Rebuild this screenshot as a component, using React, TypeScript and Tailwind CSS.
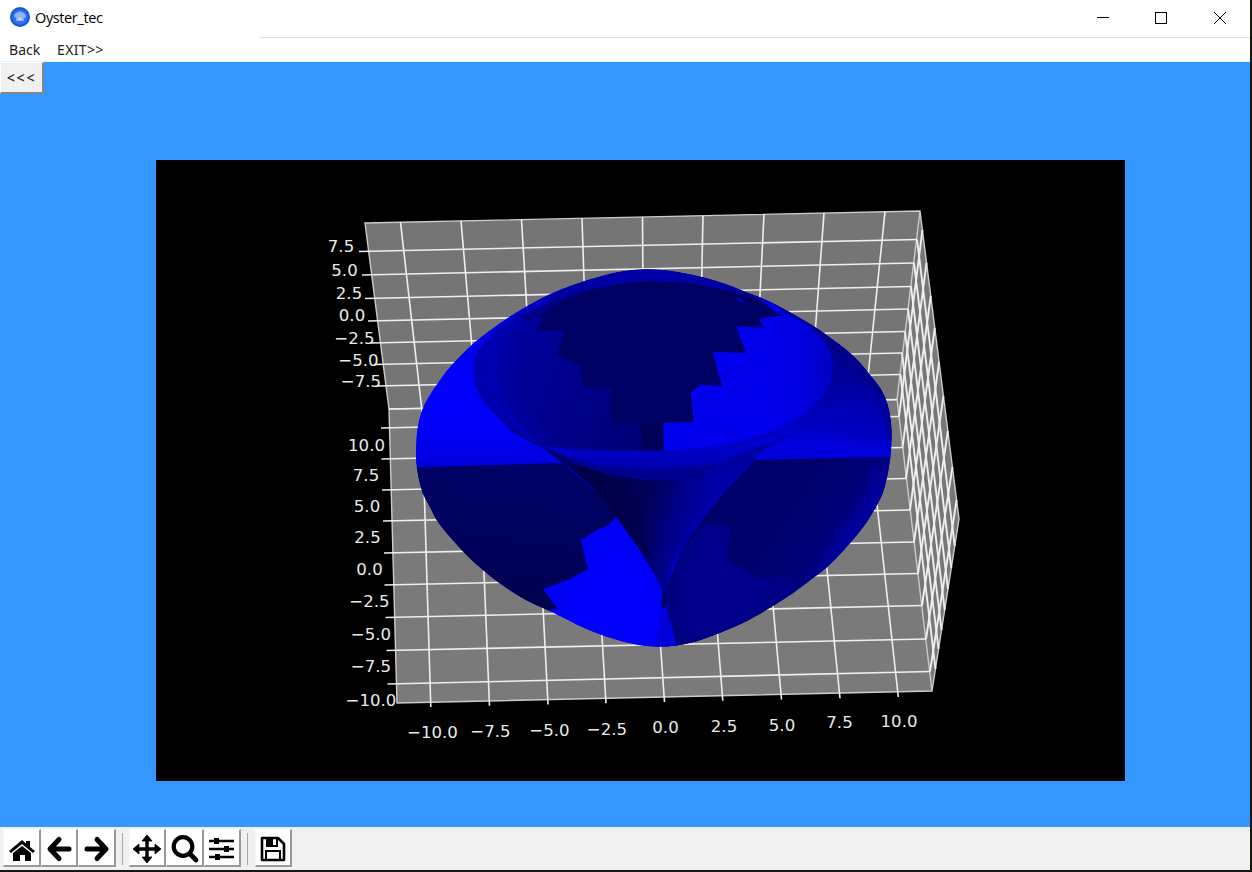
import React from "react";

type Line = [number, number, number, number];
type Label = [string, number, number];

const zLines: Line[] = [
  [359, 251.5, 917, 239.5],
  [362, 275, 914, 263],
  [365, 298.5, 911, 286.5],
  [368, 321, 908, 309],
  [371, 343, 905, 331.5],
  [374, 364.5, 902, 353],
  [377, 386, 900.5, 374.5],
];
const yLines: Line[] = [
  [381, 428, 899, 416.5],
  [381.5, 459, 902.5, 447.5],
  [382, 490, 906, 478.5],
  [383, 521, 910, 510],
  [384, 553, 914, 542],
  [384.5, 585, 918, 573.5],
  [385.5, 617.5, 922, 605.5],
  [386.5, 650.5, 926, 639],
  [387.5, 684, 930, 671.5],
];
const xTop = [400.5, 461, 521.5, 582, 642.5, 703, 764, 824, 885];
const xBottom = [430.8, 489.5, 548, 606, 664.5, 722.8, 781.5, 840, 898.3];
const zEnds = [546, 568, 589, 610, 630, 649, 669];
const yEnds = [230, 262.7, 296, 328, 362, 396, 431, 467, 500];

const labels: Label[] = [
  ["7.5", 341, 252], ["5.0", 344.5, 276], ["2.5", 349, 298.5], ["0.0", 352, 321],
  ["−2.5", 354.5, 343.5], ["−5.0", 358.5, 365.5], ["−7.5", 361, 387],
  ["10.0", 366.5, 451], ["7.5", 366, 481], ["5.0", 367, 512], ["2.5", 367.5, 543.4],
  ["0.0", 369.5, 575], ["−2.5", 369.5, 607], ["−5.0", 371, 639.5], ["−7.5", 371, 672],
  ["−10.0", 371, 706],
  ["−10.0", 432.5, 738.4], ["−7.5", 490.5, 737], ["−5.0", 549.5, 736], ["−2.5", 607, 734.5],
  ["0.0", 665.5, 733.4], ["2.5", 724, 732], ["5.0", 782, 731], ["7.5", 839.5, 728.4], ["10.0", 899, 727.4],
];

const rimPoints: [number, number][] = [
  [416, 447], [417, 430], [421, 411], [428, 397], [437, 384], [446, 371], [458, 358], [473, 343],
  [490, 330], [510, 316], [530, 304], [553, 292], [587, 279.5], [620, 271], [640, 269], [660, 269.5],
  [680, 272], [705, 277.5], [728, 284.5], [748, 293], [765, 299], [790, 312], [817, 328], [832, 339],
  [847, 350], [860, 362], [870, 375], [881, 388], [888, 404], [891, 420], [892, 440], [890, 462],
  [887, 478], [883, 494], [877, 505], [868, 521], [857, 535], [845, 549], [828, 567], [813, 578],
  [795, 592], [773, 606], [748, 621], [720, 633], [695, 642], [675, 646], [655, 647], [634, 644.5],
  [603, 636], [577, 625], [553, 612], [528, 602], [500, 584], [484, 571], [470, 559], [455, 543],
  [437, 522], [430, 507], [422, 493], [418, 476], [416, 462],
];
const mid = (i: number) => {
  const a = rimPoints[i % rimPoints.length];
  const b = rimPoints[(i + 1) % rimPoints.length];
  return `${(a[0] + b[0]) / 2} ${(a[1] + b[1]) / 2}`;
};
const outline = `M${mid(rimPoints.length - 1)}` + rimPoints.map((p, i) => `Q${p[0]} ${p[1]} ${mid(i)}`).join("") + "Z";

function Plot() {
  return (
    <svg className="block h-full w-full" viewBox="156 160 969 621">
      <defs>
        <clipPath id="body"><path d={outline} /></clipPath>
        <linearGradient id="shell" gradientUnits="userSpaceOnUse" x1="455" y1="400" x2="580" y2="280">
          <stop offset="0" stopColor="#0000fc" /><stop offset="0.3" stopColor="#0000ee" /><stop offset="0.6" stopColor="#0000cc" /><stop offset="1" stopColor="#0000a6" />
        </linearGradient>
        <linearGradient id="west" gradientUnits="userSpaceOnUse" x1="0" y1="400" x2="0" y2="466">
          <stop offset="0" stopColor="#0000fc" stopOpacity="0" /><stop offset="0.5" stopColor="#0000f6" /><stop offset="1" stopColor="#0000dc" />
        </linearGradient>
        <linearGradient id="inner" gradientUnits="userSpaceOnUse" x1="497" y1="370" x2="640" y2="430">
          <stop offset="0" stopColor="#00009e" /><stop offset="0.35" stopColor="#000090" /><stop offset="1" stopColor="#000076" />
        </linearGradient>
        <linearGradient id="east" gradientUnits="userSpaceOnUse" x1="860" y1="380" x2="850" y2="458">
          <stop offset="0" stopColor="#00009c" /><stop offset="0.4" stopColor="#0000b0" /><stop offset="0.65" stopColor="#0000c0" /><stop offset="0.9" stopColor="#0000dc" />
        </linearGradient>
        <linearGradient id="lit" gradientUnits="userSpaceOnUse" x1="664" y1="0" x2="833" y2="0">
          <stop offset="0" stopColor="#0000f0" /><stop offset="0.6" stopColor="#0000ec" /><stop offset="0.8" stopColor="#0000e4" /><stop offset="0.88" stopColor="#0000d2" /><stop offset="1" stopColor="#0000c4" />
        </linearGradient>
        <linearGradient id="southwest" gradientUnits="userSpaceOnUse" x1="520" y1="470" x2="500" y2="600">
          <stop offset="0" stopColor="#000066" /><stop offset="0.7" stopColor="#00005a" /><stop offset="1" stopColor="#00004c" />
        </linearGradient>
        <linearGradient id="southeast" gradientUnits="userSpaceOnUse" x1="780" y1="500" x2="855" y2="550">
          <stop offset="0" stopColor="#00006a" /><stop offset="0.65" stopColor="#000078" /><stop offset="1" stopColor="#0000a0" />
        </linearGradient>
        <linearGradient id="band" gradientUnits="userSpaceOnUse" x1="0" y1="446" x2="0" y2="470">
          <stop offset="0" stopColor="#0000d0" /><stop offset="1" stopColor="#0000aa" />
        </linearGradient>
        <linearGradient id="cone" gradientUnits="userSpaceOnUse" x1="600" y1="500" x2="720" y2="530">
          <stop offset="0" stopColor="#00004c" /><stop offset="0.35" stopColor="#000058" /><stop offset="0.5" stopColor="#00006c" /><stop offset="0.6" stopColor="#000086" /><stop offset="0.85" stopColor="#0000a6" />
        </linearGradient>
      </defs>

      <path fill="#757575" d="M365 223L920 211L897 399.5L389 409Z" />
      <path fill="#7a7a7a" d="M389 409L897 399.5L932 691L397 703Z" />
      <path fill="#777777" d="M920 211L959 519L932 691L897 399.5Z" />
      <g stroke="#efefef" strokeWidth="1.6" fill="none">
        <path strokeWidth="1.4" stroke="#cccccc" d="M365 223L920 211L897 399.5L389 409ZM389 409L397 703L932 691L897 399.5M920 211L959 519L932 691" />
        <path d="M389 409L897 399.5" />
        {[...zLines, ...yLines].map(([a, b, c, d], i) => <line key={i} x1={a} y1={b} x2={c} y2={d} />)}
        {xTop.map((x, i) => (
          <polyline key={i} points={`${x},${222.2 - i * 1.3} ${421.7 + i * 55.48},${408.4 - i} ${xBottom[i]},${707 - i * 1.25}`} />
        ))}
        <g strokeWidth="1.9">
          {zEnds.map((y, i) => (
            <line key={i} x1={zLines[i][2]} y1={zLines[i][3]} x2={959 - (27 * (y - 519)) / 172} y2={y} />
          ))}
          {yEnds.map((y, i) => (
            <line key={i} x1={yLines[i][2]} y1={yLines[i][3]} x2={920 + (39 * (y - 211)) / 308} y2={y} />
          ))}
        </g>
      </g>

      <g clipPath="url(#body)">
        <path d={outline} fill="url(#shell)" />
        <path fill="url(#west)" d="M410 390L478 395L533 444L563 464L410 468Z" />
        <path fill="url(#east)" d="M748 288L800 300L900 370V458L755 461L745 440Z" />
        <path fill="#000088" opacity="0.8" d="M763 299L782 304L820 328L846 349L868 374L880 386L884 396L862 382L838 362L815 330Z" />
        <path fill="#0000c0" opacity="0.3" d="M822 412Q850 390 862 396Q878 410 882 432L800 431Z" />
        <path fill="#000090" opacity="0.7" d="M868 374L884 392L892 420V440L888 440Q884 405 868 385Z" />

        <path fill="#0000b0" d="M473 370C474 348 489 333 527 310L650 276L740 290L785 310Q831 332 833 367C831 405 780 440 720 449L650 453L565 451L533 444L510 430L486 405Q474 390 473 370Z" />
        <path fill="url(#inner)" d="M497 372Q499 337 527 315L600 290L664 300V451L600 450L543 446Q500 408 497 372Z" />
        <path fill="#0000aa" opacity="0.35" d="M497 372Q500 335 528 316L535 325Q514 348 518 385Q524 412 546 432L556 447L543 446Q500 408 497 372Z" />
        <path fill="#0000a4" d="M545 298Q600 272 650 268T748 289L763 301L738 293Q698 281 650 281T560 303Z" />
        <path fill="#000086" d="M520 318Q560 290 640 281L650 284L560 310L530 320Z" />
        <path fill="#000062" d="M540 316L560 302L590 290L622 284L650 281L690 283L730 291L745 294L764 302L783 316L762 318L764 328L736 326L746 353L713 352L722 386L700 385L691 392L694 422L663 423L664 450H642L641 423H612L611 388L583 387L580 366L557 355L565 331L537 330L543 320Z" />
        <path fill="#000056" d="M641 423H663L664 450H643Z" />
        <path fill="url(#lit)" d="M664 451L663 423L694 422L691 392L700 385L722 386L713 352L746 353L736 326L764 328L759 319L777 316L788 316Q831 334 833 367Q832 395 803 415Q772 438 720 447Z" />
        <path fill="#0000ee" d="M761 299L773 303L787 316L777 313L768 306Z" />
        <path fill="#0000bc" d="M736 297L743 300L744 303L738 301Z" />
        <path fill="#0000c6" opacity="0.8" d="M664 451L720 445Q770 436 803 415L790 430L765 441L720 449L664 453Z" />
        <g fill="none" stroke="#00007c" strokeOpacity="0.14">
          <path d="M540 334Q645 315 760 330M565 354Q650 343 807 352M583 387Q650 376 817 376M611 422Q670 416 795 409M653 281L650 445M616 288L624 445M683 287L675 445M582 299L598 415M714 293L708 440M755 325L740 430M784 320L772 420" />
        </g>

        <path fill="url(#southwest)" d="M410 467.5L563 463L610 504L617 518L604 528L581 540L588 569L570 579L543 589L560 612L500 608L405 530Z" />
        <path fill="url(#southeast)" d="M755 460L895 456.500V510L780 630L664 650V590L695 523Z" />
        <path fill="#000084" d="M664 590L682 550L705 523L730 525L728 560L745 569L752 577L774 578L795 573V610L720 645L664 650Z" />
        <path fill="#000094" opacity="0.5" d="M695 545L706 526L729 526L728 560L750 575L768 580L764 603L720 634L686 642L672 622Z" />
        <path fill="#00007a" d="M664 603L674 572L682 604L692 630L705 642L678 646L665 610Z" opacity="0.5" />
        <path fill="#0000a8" opacity="0.4" d="M872 462L892 475L876 513L840 557L812 580L840 530L865 500Z" />
        <path fill="#0000f5" d="M616 517L609 524L608 527L600 528L581 540L588 569L571 579L565 584L562 583L543 589L558 609L545 610L600 642L658 650L668 604L660 580L640 548L626 528Z" />
        <path fill="#0000ff" d="M596 558L628 551L650 574L658 620L648 648L620 641L575 626L570 595Z" opacity="0.55" />
        <path fill="#0000d8" d="M664 606L670 620L678 648L654 650Z" />

        <path fill="url(#cone)" d="M543 447L570 460L600 464L664 470L757 458L725 491L704 518L685 544L672 568L664 594L656 577L638 547L617 518L596 491L570 468Z" />
        <path fill="#000044" opacity="0.5" d="M575 465L610 475L638 500L650 560L638 547L612 511L590 485Z" />
        <path fill="#0000aa" d="M757 459L725 491L704 518L685 544L672 568L665 590L671 562L690 526L706 506Z" />
        <path fill="#000090" d="M543 447L590 460L664 466L720 458L770 444L748 465L700 479Q650 483 610 475L575 464Z" />
        <path fill="url(#band)" d="M540 446L570 450L610 452L664 452L720 449L768 442L727 462Q660 475 594 464L565 456Z" />
        <path fill="#0000a8" opacity="0.75" d="M803 428L770 442L750 449L716 463L702 480L726 482L745 467L761 452Z" />
        <path fill="#000072" d="M497 415L530 440L555 451L585 467L562 463L543 449L515 433Z" opacity="0.5" />
        <path fill="#000062" d="M663 588L668 604L665 608L661 607Z" />
      </g>
      <g fill="#e9e9e9" className="font-['DejaVu_Sans',sans-serif] text-[16.6px]" textAnchor="middle">
        {labels.map(([t, x, y], i) => <text key={i} x={x} y={y}>{t}</text>)}
      </g>
    </svg>
  );
}

function ToolButton({ children, label }: { children: React.ReactNode; label: string }) {
  return (
    <button aria-label={label} className="flex h-[38px] w-[37.5px] shrink-0 items-center justify-center border-t border-r-2 border-b-2 border-l border-t-[#fafafa] border-r-[#989898] border-b-[#989898] border-l-[#fafafa] bg-white">
      <svg width="30" height="30" viewBox="0 0 30 30" className="mt-[3px] ml-px shrink-0">{children}</svg>
    </button>
  );
}

export default function App() {
  return (
    <div className="flex h-[872px] w-[1252px] flex-col overflow-hidden bg-[#17170f]">
      <div className="flex h-[870px] w-[1250px] flex-col">
        <header className="flex h-[37px] shrink-0 items-center bg-white pl-[10px]">
          <svg width="20" height="20" viewBox="0 0 20 20" className="-mt-[3px]">
            <circle cx="10" cy="10" r="10" fill="#1558df" />
            <circle cx="10" cy="10" r="7.8" fill="#2e70ee" />
            <path d="M4 9Q4.500 6 7 5.500Q10 3.500 13 5.500Q16 6.500 16 10L13.500 12L14 14H6L6.500 12Z" fill="#8fb4f8" />
            <path d="M8 12L10 10L12 12L13 13H7Z" fill="#c8dafc" />
          </svg>
          <span className="-mt-px ml-[5px] w-[69px] font-['Open_Sans',sans-serif] text-[14.5px] leading-5 tracking-[-0.38px] whitespace-nowrap text-black">Oyster_tec</span>
          <svg width="160" height="37" viewBox="1080 0 160 37" className="mr-[10px] ml-auto" fill="none" stroke="#000" shapeRendering="crispEdges">
            <path d="M1097 17.5H1109" />
            <rect x="1155.5" y="12.5" width="11" height="11" />
            <path shapeRendering="auto" d="M1214 12L1226 24M1226 12L1214 24" />
          </svg>
        </header>
        <div className="flex h-px shrink-0 bg-white pl-[260px]"><div className="flex-1 bg-[#dedede]" /></div>
        <nav className="flex h-6 shrink-0 items-center gap-[17px] border-b border-[#eef3fa] bg-white pb-px pl-[9px] font-['Noto_Sans',sans-serif] text-[14px] whitespace-nowrap text-[#222]">
          <span className="w-[31px] tracking-[0.05px]">Back</span>
          <span className="tracking-[0.35px]">EXIT&gt;&gt;</span>
        </nav>
        <main className="flex h-[765px] shrink-0 items-start bg-[#3497ff]">
          <button className="h-[32px] w-[44px] border-t border-r-2 border-b-2 border-l border-t-white border-r-[#858585] border-b-[#858585] border-l-white bg-[#f0f0f0] font-['Noto_Sans',sans-serif] text-[14px] leading-none font-medium tracking-[1.8px] text-[#222]">&lt;&lt;&lt;</button>
          <div className="mt-[98px] ml-[112px] h-[621px] w-[969px] bg-black"><Plot /></div>
        </main>
        <footer className="flex h-[43px] items-start bg-[#f0f0f0] pt-[2px] pl-[3px]">
          <ToolButton label="Home">
            <path d="M2 17L15 6L19 9.5V7H23V13L28 17L26 19L15 10L4 19Z" />
            <path d="M6 19L15 12L24 19V27H18V21H13V27H6Z" />
          </ToolButton>
          <ToolButton label="Back"><path d="M15 5.5L6 15L15 24.500M7 15H25" fill="none" stroke="#000" strokeWidth="5" strokeLinecap="round" strokeLinejoin="round" /></ToolButton>
          <ToolButton label="Forward"><path d="M15 5.500L24 15L15 24.500M5 15H23" fill="none" stroke="#000" strokeWidth="5" strokeLinecap="round" strokeLinejoin="round" /></ToolButton>
          <div className="mt-[4px] mr-[6px] ml-[6px] h-[32px] w-px bg-[#aaa]" />
          <ToolButton label="Pan">
            <path d="M15 3V27M3 15H27" stroke="#000" strokeWidth="3.4" />
            <path d="M15 1L20 7H10ZM15 29L10 23H20ZM1 15L7 10V20ZM29 15L23 20V10Z" stroke="#000" strokeWidth="0.8" strokeLinejoin="round" />
          </ToolButton>
          <ToolButton label="Zoom"><circle cx="13" cy="12.5" r="9.3" fill="none" stroke="#000" strokeWidth="4.2" /><path d="M20 20L26 26" stroke="#000" strokeWidth="4.7" strokeLinecap="round" /></ToolButton>
          <ToolButton label="Subplots">
            <path d="M2 7H27M2 15H27M2 23H27" stroke="#000" strokeWidth="2.5" />
            <path d="M7 4H12V10H7ZM17 12H22V18H17ZM8 20H13V26H8Z" />
          </ToolButton>
          <div className="mt-[4px] mr-[6.5px] ml-[6px] h-[32px] w-px bg-[#aaa]" />
          <ToolButton label="Save">
            <path d="M4 4H20L26 10V26H4Z" fill="none" stroke="#000" strokeWidth="2.6" strokeLinejoin="round" />
            <path d="M9 4V12H19V4M8 25V17H22V25" fill="none" stroke="#000" strokeWidth="2" />
            <path d="M8 4H15V12H8Z" />
          </ToolButton>
        </footer>
      </div>
    </div>
  );
}
